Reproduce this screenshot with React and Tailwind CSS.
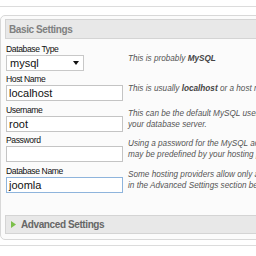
export default function App() {
  const label = "h-[9px] leading-[9px] text-[8.6px] tracking-[-0.4px] text-[#111] mb-[1px] whitespace-nowrap";
  const input =
    "h-[16px] w-[117px] border border-[#c4c4c4] bg-white text-[11px] leading-[14px] pl-[2px] text-[#111] flex items-center";
  const desc = "flex flex-col justify-center text-[8.2px] leading-[11px] italic text-[#555] whitespace-nowrap";
  return (
    <div className="w-[256px] h-[256px] overflow-hidden bg-white font-['Liberation_Sans',Arial,sans-serif]">
      <div className="pt-[6px]">
        <div className="border-t border-[#dcdcdc] w-[400px]" />
      </div>
      <div className="mt-[8px] w-[420px] border border-[#d8d8d8] rounded-[5px] bg-[#fbfbfb] pl-[4px] pt-[3px] pb-[5px]">
        <div className="h-[20px] border border-[#d4d4d4] bg-[#e8e8e8] flex items-center pl-[3px] text-[10px] font-bold tracking-[-0.4px] text-[#808080]">
          Basic Settings
        </div>
        <div className="ml-[1px] mt-[6px] flex flex-col">
          {/* Row 1 */}
          <div className="flex">
            <div className="w-[117px] flex flex-col">
              <div className={label}>Database Type</div>
              <div className="h-[16px] w-[78px] border border-[#c8c8c8] bg-white text-[11px] pl-[3px] text-[#111] flex items-center justify-between pr-[4px]">
                <span>mysql</span>
                <svg width="6" height="4" viewBox="0 0 6 4">
                  <path d="M0 0 H6 L3 4 Z" fill="#111" />
                </svg>
              </div>
            </div>
            <div className={"ml-[5px] " + desc}>
              <div>
                This is probably <b className="text-[#444]">MySQL</b>
              </div>
            </div>
          </div>
          {/* Row 2 */}
          <div className="flex mt-[4px]">
            <div className="w-[117px] flex flex-col">
              <div className={label}>Host Name</div>
              <div className={input}>localhost</div>
            </div>
            <div className={"ml-[5px] " + desc}>
              <div>
                This is usually <b className="text-[#444]">localhost</b> or a host name provided by the hosting provider.
              </div>
            </div>
          </div>
          {/* Row 3 */}
          <div className="flex mt-[5px]">
            <div className="w-[117px] flex flex-col">
              <div className={label}>Username</div>
              <div className={input}>root</div>
            </div>
            <div className={"ml-[5px] " + desc}>
              <div>This can be the default MySQL username root or a user created for</div>
              <div>your database server.</div>
            </div>
          </div>
          {/* Row 4 */}
          <div className="flex mt-[4px]">
            <div className="w-[117px] flex flex-col">
              <div className={label}>Password</div>
              <div className={input}></div>
            </div>
            <div className={"ml-[5px] " + desc}>
              <div>Using a password for the MySQL account is mandatory for site security.</div>
              <div>may be predefined by your hosting provider.</div>
            </div>
          </div>
          {/* Row 5 */}
          <div className="flex mt-[5px]">
            <div className="w-[117px] flex flex-col">
              <div className={label}>Database Name</div>
              <div className="h-[16px] w-[117px] border border-[#8eb4dc] bg-white text-[11px] pl-[2px] text-[#111] flex items-center">
                joomla
              </div>
            </div>
            <div className={"ml-[5px] " + desc}>
              <div>Some hosting providers allow only a certain DB name per site. Use table prefix</div>
              <div>in the Advanced Settings section below for more sites.</div>
            </div>
          </div>
        </div>
        <div className="mt-[22px] h-[19px] border border-[#d4d4d4] bg-[#e8e8e8] flex items-center pl-[5px] gap-[5px] text-[10px] font-bold tracking-[-0.4px] text-[#666]">
          <svg width="5" height="7" viewBox="0 0 5 7">
            <path d="M0 0 L5 3.5 L0 7 Z" fill="#7cc04b" />
          </svg>
          <span>Advanced Settings</span>
        </div>
      </div>
      <div className="mt-[5px] border-t border-[#dcdcdc] w-[400px]" />
    </div>
  );
}
